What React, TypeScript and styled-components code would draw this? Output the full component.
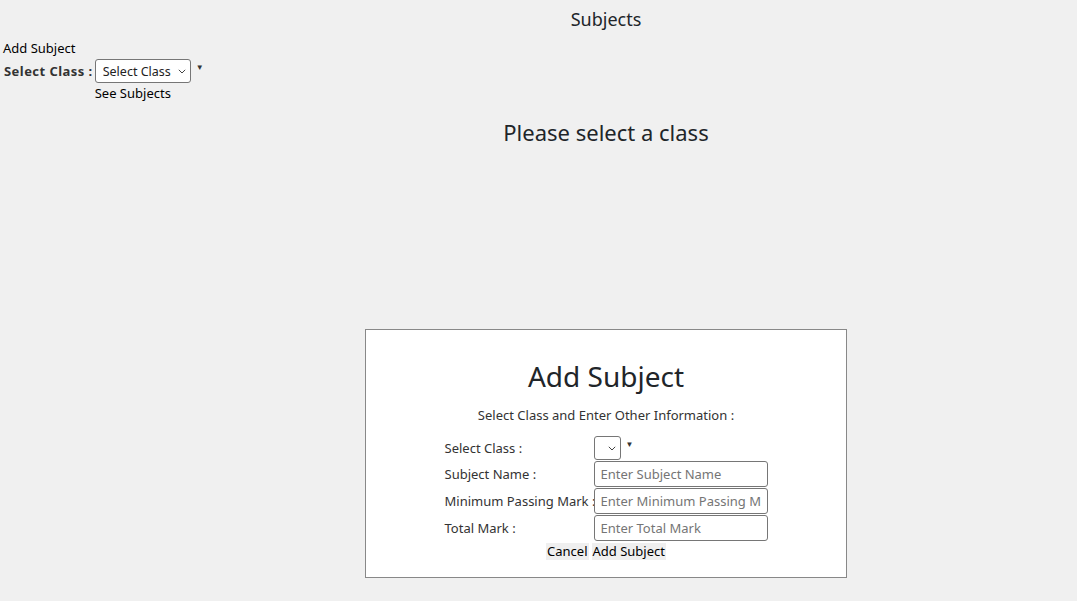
import styled, { createGlobalStyle } from "styled-components";

const GlobalStyle = createGlobalStyle`
  html, body {
    margin: 0;
    padding: 0;
    background: #f0f0f0;
    color: #212529;
    font-family: "Noto Sans", "Open Sans", sans-serif;
  }
  * { box-sizing: border-box; }
`;

const Chevron: React.FC = () => (
  <svg width="8" height="5" viewBox="0 0 8 5" fill="none">
    <path d="M0.8 0.8l3.2 3.2L7.2 0.8" stroke="#444" strokeWidth="1" />
  </svg>
);

const App: React.FC = () => {
  return (
    <>
      <GlobalStyle />
      <Page>
        <Side>
          <SideTitle>Add Subject</SideTitle>
          <ClassPicker>
            <PickerLabel>Select Class :</PickerLabel>
            <div>
              <PickerRow>
                <SelectWrap $width={96}>
                  <Select defaultValue="">
                    <option value="">Select Class</option>
                  </Select>
                  <ChevronSlot>
                    <Chevron />
                  </ChevronSlot>
                </SelectWrap>
                <Caret>▼</Caret>
              </PickerRow>
              <SeeLink>See Subjects</SeeLink>
            </div>
          </ClassPicker>
        </Side>
        <Main>
          <Title>Subjects</Title>
          <Empty>Please select a class</Empty>
          <Modal>
            <ModalTitle>Add Subject</ModalTitle>
            <Hint>Select Class and Enter Other Information :</Hint>
            <Form>
              <Label>Select Class :</Label>
              <PickerRow>
                <SelectWrap $width={27}>
                  <Select defaultValue="">
                    <option value=""></option>
                  </Select>
                  <ChevronSlot>
                    <Chevron />
                  </ChevronSlot>
                </SelectWrap>
                <Caret>▼</Caret>
              </PickerRow>
              <Label>Subject Name :</Label>
              <Input placeholder="Enter Subject Name" />
              <Label>Minimum Passing Mark :</Label>
              <Input placeholder="Enter Minimum Passing Mark" />
              <Label>Total Mark :</Label>
              <Input placeholder="Enter Total Mark" />
            </Form>
            <Actions>
              <Button>Cancel</Button>
              <Button>Add Subject</Button>
            </Actions>
          </Modal>
        </Main>
      </Page>
    </>
  );
};

export default App;

const Page = styled.div`
  display: grid;
  grid-template-columns: 135px 1fr;
  width: 1077px;
  height: 601px;
  overflow: hidden;
`;

const Side = styled.div`
  padding: 40px 0 0 3px;
  white-space: nowrap;
  font-size: 13px;
  color: #000;
`;

const SideTitle = styled.div`
  line-height: 17px;
`;

const ClassPicker = styled.div`
  display: flex;
  align-items: flex-start;
  margin-top: 2px;
`;

const PickerLabel = styled.span`
  font-weight: bold;
  color: #333;
  line-height: 24px;
  letter-spacing: 0.45px;
  padding: 0 1px;
  margin-right: 1px;
`;

const PickerRow = styled.div`
  display: flex;
  align-items: flex-start;
`;

const SelectWrap = styled.div<{ $width: number }>`
  position: relative;
  width: ${({ $width }) => $width}px;
  height: 24px;
`;

const Select = styled.select`
  appearance: none;
  width: 100%;
  height: 100%;
  margin: 0;
  padding: 0 18px 0 7px;
  border: 1px solid #767676;
  border-radius: 3px;
  background: #fff;
  color: #222;
  font-family: inherit;
  font-size: 12.5px;
`;

const ChevronSlot = styled.span`
  position: absolute;
  right: 5px;
  top: 10px;
  display: flex;
  pointer-events: none;
`;

const Caret = styled.span`
  font-size: 8px;
  line-height: 8px;
  margin: 4px 0 0 5px;
  color: #333;
`;

const SeeLink = styled.div`
  line-height: 20px;
`;

const Main = styled.div`
  display: flex;
  flex-direction: column;
  align-items: center;
`;

const Title = styled.h2`
  margin: 7px 0 0;
  font-size: 18px;
  font-weight: 400;
  line-height: 24px;
`;

const Empty = styled.h3`
  margin: 85px 0 0;
  font-size: 22px;
  font-weight: 400;
  line-height: 32px;
`;

const Modal = styled.div`
  margin-top: 181px;
  width: 482px;
  height: 249px;
  background: #fff;
  border: 1px solid #888;
  display: flex;
  flex-direction: column;
  align-items: center;
  padding-top: 26px;
`;

const ModalTitle = styled.h1`
  margin: 0;
  font-size: 28px;
  font-weight: 400;
  line-height: 40px;
`;

const Hint = styled.p`
  margin: 10px 0 0;
  font-size: 13px;
  line-height: 18px;
  color: #333;
`;

const Form = styled.div`
  display: grid;
  grid-template-columns: 149px 174px;
  row-gap: 1px;
  align-items: center;
  margin-top: 12px;
  font-size: 13px;
  color: #333;
`;

const Label = styled.span`
  white-space: nowrap;
`;

const Input = styled.input`
  width: 174px;
  height: 26px;
  margin: 0;
  padding: 0 6px;
  border: 1px solid #767676;
  border-radius: 3px;
  font-family: inherit;
  font-size: 13px;
  color: #222;
  &::placeholder {
    color: #757575;
  }
`;

const Actions = styled.div`
  display: flex;
  gap: 3px;
  margin-top: 2px;
`;

const Button = styled.button`
  border: none;
  background: #efefef;
  padding: 0 1px;
  height: 17px;
  font-family: inherit;
  font-size: 13px;
  line-height: 17px;
  color: #000;
`;
